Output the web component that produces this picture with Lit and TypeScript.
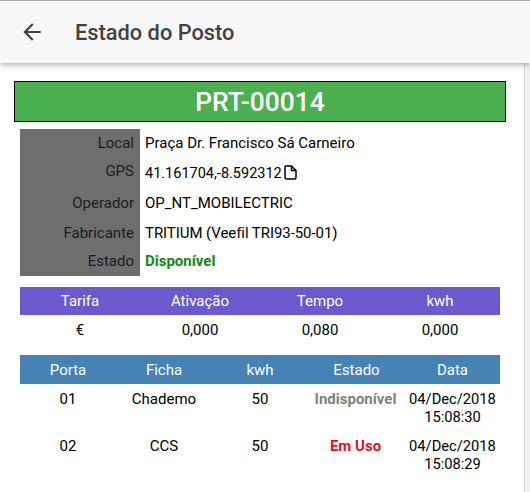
import { LitElement, html, css } from "lit";
import { customElement } from "lit/decorators.js";

@customElement("app-root")
export class AppRoot extends LitElement {
  static styles = css`
    :host { display: block; width: 530px; height: 492px; overflow: hidden; background: #fff; font-family: Roboto, sans-serif; font-size: 15px; color: #000; position: relative; }
    .bar { height: 62px; box-sizing: content-box; border-top: 1px solid #a8a8a8; background: #f7f7f7; display: flex; align-items: center; box-shadow: 0 2px 4px -1px rgba(0,0,0,.2), 0 4px 5px 0 rgba(0,0,0,.12); position: relative; z-index: 2; color: #424242; }
    .back { width: 26px; height: 26px; margin-left: 19px; margin-right: 30px; }
    .title { font-size: 21.8px; font-weight: 500; }
    .scroll { position: absolute; right: 0; top: 63px; bottom: 0; width: 6px; background: #f1f1f1; border-left: 1px solid #d8d8d8; box-sizing: border-box; }
    .content { padding: 18px 24px 0 14px; }
    .code { height: 41px; box-sizing: border-box; border: 1px solid #000; background: #4caf50; color: #fff; font-size: 26.4px; font-weight: 500; display: flex; align-items: center; justify-content: center; }
    .inner { padding: 7px 6px 0; }
    table { border-collapse: collapse; width: 480px; table-layout: fixed; }
    td, th { padding: 0; font-weight: 400; text-align: center; }
    .info td { text-align: left; }
    .info td.k { width: 120px; background: #6e6e6e; text-align: right; color: #1c1c1c; padding-right: 6px; box-sizing: border-box; }
    .info td.v { padding-left: 5px; }
    .r1 td { height: 28px; } .r2 td { height: 31px; } .r3 td { height: 30px; } .r4 td { height: 29px; } .r5 td { height: 29px; }
    .info .r2 td.k { padding-bottom: 3px; box-sizing: border-box; }
    .info .r5 td { padding-bottom: 2px; box-sizing: border-box; }
    .gps { display: inline-flex; align-items: center; gap: 2px; font-size: 14.5px; }
    .gps svg { width: 13px; height: 15px; margin-top: -2px; }
    .tri { letter-spacing: -.07px; }
    .ok { color: #118a11; font-weight: 700; }
    .rates { margin-top: 11px; }
    .rates th { background: #6a5acd; color: #fff; height: 28px; }
    .rates td { height: 30px; }
    .ports { margin-top: 10px; }
    .ports th { background: #4682b4; color: #fff; height: 29px; }
    .ports td { vertical-align: top; padding-top: 6px; height: 41px; line-height: 18px; box-sizing: content-box; }
    .un { color: #808080; font-weight: 700; margin-right: 2px; }
    .use { color: #dc1420; font-weight: 700; margin-right: 2px; }
    .date { font-size: 14.7px; }
    .c1 { width: 96px; } .c2 { width: 96px; } .c3 { width: 96px; } .c4 { width: 97px; } .c5 { width: 95px; }
  `;

  render() {
    return html`
      <div class="bar">
        <svg class="back" viewBox="0 0 24 24" fill="#424242"><path d="M20 11H7.83l5.59-5.59L12 4l-8 8 8 8 1.41-1.41L7.83 13H20v-2z"/></svg>
        <span class="title">Estado do Posto</span>
      </div>
      <div class="scroll"></div>
      <div class="content">
        <div class="code">PRT-00014</div>
        <div class="inner">
          <table class="info">
            <tr class="r1"><td class="k">Local</td><td class="v">Praça Dr. Francisco Sá Carneiro</td></tr>
            <tr class="r2"><td class="k">GPS</td><td class="v"><span class="gps">41.161704,-8.592312
              <svg viewBox="0 0 13 15" fill="none" stroke="#000" stroke-width="1.5"><path d="M2 1h5.5L12 5.5V12.5a1.5 1.5 0 0 1-1.5 1.5h-8A1.5 1.5 0 0 1 1 12.5V2a1 1 0 0 1 1-1z"/><path d="M7.5 1v4.5H12" /></svg></span></td></tr>
            <tr class="r3"><td class="k">Operador</td><td class="v">OP_NT_MOBILECTRIC</td></tr>
            <tr class="r4"><td class="k">Fabricante</td><td class="v tri">TRITIUM (Veefil TRI93-50-01)</td></tr>
            <tr class="r5"><td class="k">Estado</td><td class="v"><span class="ok">Disponível</span></td></tr>
          </table>
          <table class="rates">
            <tr><th>Tarifa</th><th>Ativação</th><th>Tempo</th><th>kwh</th></tr>
            <tr><td>€</td><td>0,000</td><td>0,080</td><td>0,000</td></tr>
          </table>
          <table class="ports">
            <colgroup><col class="c1"/><col class="c2"/><col class="c3"/><col class="c4"/><col class="c5"/></colgroup>
            <tr><th>Porta</th><th>Ficha</th><th>kwh</th><th>Estado</th><th>Data</th></tr>
            <tr><td>01</td><td>Chademo</td><td>50</td><td><span class="un">Indisponível</span></td><td class="date">04/Dec/2018<br/>15:08:30</td></tr>
            <tr><td>02</td><td>CCS</td><td>50</td><td><span class="use">Em Uso</span></td><td class="date">04/Dec/2018<br/>15:08:29</td></tr>
          </table>
        </div>
      </div>
    `;
  }
}
